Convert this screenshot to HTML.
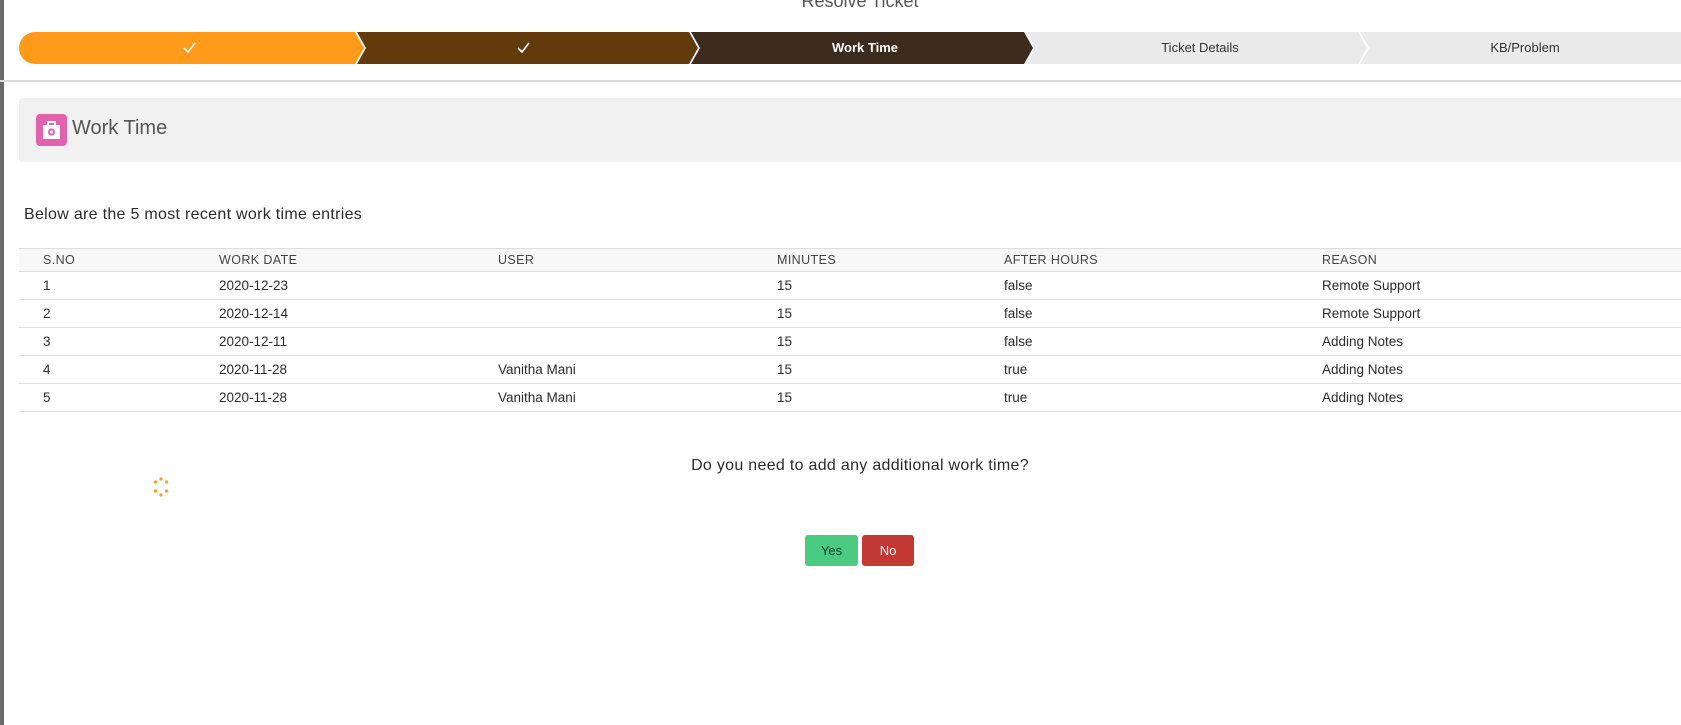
<!DOCTYPE html>
<html><head><meta charset="utf-8"><style>
*{box-sizing:border-box;margin:0;padding:0}
body{width:1681px;height:725px;overflow:hidden;background:#fff;font-family:"Liberation Sans",sans-serif;color:#2b2b2b;position:relative}
.strip{position:absolute;left:0;top:0;width:4px;height:725px;background:#6b6b6b}
.title{position:absolute;top:-9px;left:0;width:1720px;text-align:center;font-size:18px;color:#555}
.lbl{position:absolute;top:32px;height:32px;line-height:32px;text-align:center;font-size:13px}
.hr{position:absolute;left:0;right:0;top:80px;height:2px;background:#dcdcdc}
.panel{position:absolute;left:19px;right:0;top:98px;height:64px;background:#f1f1f1;border-radius:3px 0 0 3px}
.icon{position:absolute;left:36px;top:114px;width:31px;height:32px;background:#e163ad;border-radius:4px}
.ptitle{position:absolute;left:72px;top:117px;font-size:20px;color:#555;font-weight:300}
.intro{position:absolute;left:24px;top:206px;font-size:16px;letter-spacing:.3px}
table{position:absolute;left:19px;top:248px;width:1662px;border-collapse:collapse;font-size:13.5px}
td,th{height:28px;border-top:1px solid #ddd;text-align:left;font-weight:normal;padding:0}
th{height:23px;background:#f8f8f8;color:#444;letter-spacing:.4px;font-size:12.5px}
tr:last-child td{border-bottom:1px solid #ddd}
.q{position:absolute;left:0;width:1720px;top:457px;text-align:center;font-size:16px;letter-spacing:.3px}
.btn{position:absolute;top:535px;height:31px;border-radius:3px;font-size:13px;line-height:31px;text-align:center}
</style></head><body>
<div class="strip"></div>
<div class="title">Resolve Ticket</div>
<svg style="position:absolute;left:0;top:0" width="1681" height="70">
<path d="M35 32 H355 L364 48 L355 64 H35 A16 16 0 0 1 35 32 Z" fill="#ff9a1b"/>
<path d="M357 32 H689 L698 48 L689 64 H357 L366 48 Z" fill="#633a0c"/>
<path d="M691 32 H1024 L1033 48 L1024 64 H691 L700 48 Z" fill="#3d2b1e"/>
<path d="M1026 32 H1358 L1367 48 L1358 64 H1026 L1035 48 Z" fill="#ebeaea"/>
<path d="M1360 32 H1681 V64 H1360 L1369 48 Z" fill="#ebeaea"/>
<path d="M184 48 L188 52 L195 43" stroke="#fff" stroke-width="1.6" fill="none"/>
<path d="M518 48 L522 52 L529 43" stroke="#fff" stroke-width="1.6" fill="none"/>
</svg>
<div class="lbl" style="left:700px;width:330px;color:#fff;font-weight:bold">Work Time</div>
<div class="lbl" style="left:1035px;width:330px;color:#333">Ticket Details</div>
<div class="lbl" style="left:1369px;width:312px;color:#333">KB/Problem</div>
<div class="hr"></div>
<div class="panel"></div>
<div class="icon"><svg width="31" height="32"><rect x="7" y="11" width="17" height="14" fill="#fff"/><path d="M12 11V8h7v3" stroke="#fff" stroke-width="2" fill="none"/><circle cx="15.5" cy="18" r="3.5" fill="#e163ad"/><circle cx="15.5" cy="18" r="1.5" fill="#fff"/></svg></div>
<div class="ptitle">Work Time</div>
<div class="intro">Below are the 5 most recent work time entries</div>
<table>
<colgroup><col style="width:24px"><col style="width:176px"><col style="width:279px"><col style="width:279px"><col style="width:227px"><col style="width:318px"><col></colgroup>
<tr><th></th><th>S.NO</th><th>WORK DATE</th><th>USER</th><th>MINUTES</th><th>AFTER HOURS</th><th>REASON</th></tr>
<tr><td></td><td>1</td><td>2020-12-23</td><td></td><td>15</td><td>false</td><td>Remote Support</td></tr>
<tr><td></td><td>2</td><td>2020-12-14</td><td></td><td>15</td><td>false</td><td>Remote Support</td></tr>
<tr><td></td><td>3</td><td>2020-12-11</td><td></td><td>15</td><td>false</td><td>Adding Notes</td></tr>
<tr><td></td><td>4</td><td>2020-11-28</td><td>Vanitha Mani</td><td>15</td><td>true</td><td>Adding Notes</td></tr>
<tr><td></td><td>5</td><td>2020-11-28</td><td>Vanitha Mani</td><td>15</td><td>true</td><td>Adding Notes</td></tr>
</table>
<div class="q">Do you need to add any additional work time?</div>
<svg style="position:absolute;left:150px;top:476px" width="22" height="22" fill="#ff9a1b">
<circle cx="11" cy="3" r="1.6"/><circle cx="16.5" cy="6" r="1.6"/><circle cx="16.5" cy="15" r="1.6"/><circle cx="11" cy="19" r="1.6"/><circle cx="5.5" cy="15" r="1.6"/><circle cx="5.5" cy="6" r="1.6"/>
</svg>
<div class="btn" style="left:805px;width:53px;background:#4bca81;color:#1d3b29">Yes</div>
<div class="btn" style="left:862px;width:52px;background:#c23934;color:#fff">No</div>
</body></html>
